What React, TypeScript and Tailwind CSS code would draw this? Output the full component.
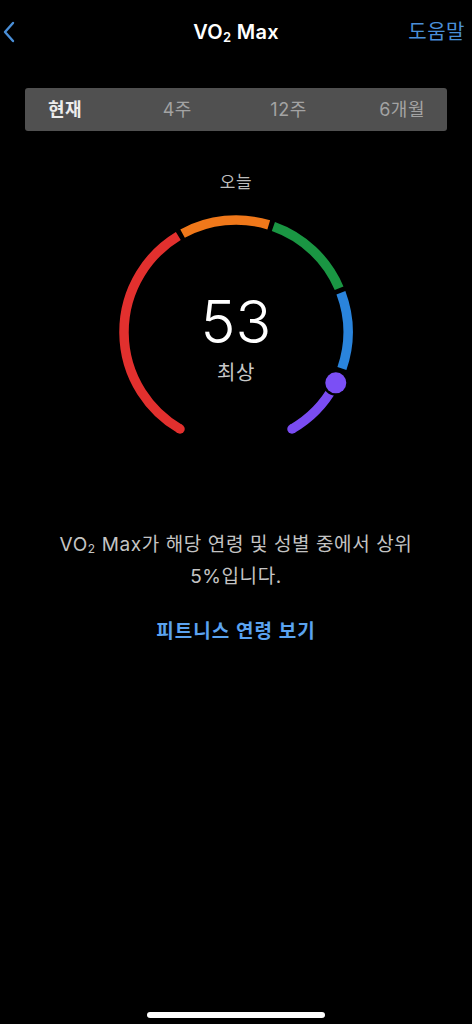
import React from 'react'

const font = { fontFamily: 'Inter, "Noto Sans CJK KR", sans-serif' }

const CX = 120
const CY = 120
const R = 112

function pt(deg: number) {
  const a = (deg * Math.PI) / 180
  return [CX + R * Math.cos(a), CY + R * Math.sin(a)]
}

function arc(a0: number, a1: number) {
  const [x0, y0] = pt(a0)
  const [x1, y1] = pt(a1)
  const large = a1 - a0 > 180 ? 1 : 0
  return `M ${x0} ${y0} A ${R} ${R} 0 ${large} 1 ${x1} ${y1}`
}

const segments = [
  { from: 120, to: 239, color: '#e2302e' },
  { from: 241.5, to: 287, color: '#f0781a' },
  { from: 289.5, to: 337, color: '#1a9643' },
  { from: 339.5, to: 379, color: '#2a84dc' },
  { from: 389, to: 420, color: '#7a4cf2' },
]

function Gauge() {
  const [sx, sy] = pt(120)
  const [ex, ey] = pt(420)
  const [dx, dy] = pt(387)
  return (
    <div className="relative w-[240px] h-[240px]">
      <svg width="240" height="240" viewBox="0 0 240 240">
        {segments.map((s) => (
          <path key={s.from} d={arc(s.from, s.to)} stroke={s.color} strokeWidth="9.5" fill="none" />
        ))}
        <circle cx={sx} cy={sy} r="4.75" fill="#e2302e" />
        <circle cx={ex} cy={ey} r="4.75" fill="#7a4cf2" />
        <circle cx={dx} cy={dy} r="13" fill="#000" />
        <circle cx={dx} cy={dy} r="10.5" fill="#7b4ff5" />
      </svg>
      <div className="absolute inset-x-0 top-[78px] text-center text-white text-[59px] leading-[64px] font-light">53</div>
      <div className="absolute inset-x-0 top-[149px] text-center text-[#c9c9c9] text-[20px] leading-6 tracking-[0.5px]">최상</div>
    </div>
  )
}

export default function App() {
  return (
    <div className="relative h-[1024px] w-full bg-black overflow-hidden" style={font}>
      {/* Nav */}
      <div className="relative h-[64px] flex items-center justify-center">
        <svg className="absolute left-[2px] top-[21px]" width="14" height="22" viewBox="0 0 14 22">
          <path d="M11 2 L3 11 L11 20" stroke="#4a8fd8" strokeWidth="2.4" fill="none" strokeLinecap="round" strokeLinejoin="round" />
        </svg>
        <div className="text-white text-[20px] font-semibold tracking-[0.3px]">
          VO<span className="text-[13px] align-[-3px]">2</span> Max
        </div>
        <div className="absolute right-[7px] top-[18px] text-[#4a8fd8] text-[20px] leading-[28px] tracking-[0.5px]">도움말</div>
      </div>

      {/* Segmented control */}
      <div className="mx-[25px] mt-[24px] h-[43px] rounded-[3px] bg-[#505050] flex items-center justify-between pl-[23px] pr-[22px] text-[18px] tracking-[0.5px]">
        <span className="text-[#ececec] font-bold">현재</span>
        <span className="text-[#a3a3a3] ml-[8px]">4주</span>
        <span className="text-[#a3a3a3] ml-[6px]">12주</span>
        <span className="text-[#a3a3a3]">6개월</span>
      </div>

      {/* Gauge */}
      <div className="flex flex-col items-center">
        <div className="mt-[41px] text-[17px] leading-5 text-[#bdbdbd] tracking-[0.5px]">오늘</div>
        <div className="mt-[20px]">
          <Gauge />
        </div>
        <div className="mt-[79px] text-center text-[19px] leading-[28px] text-[#c4c4c4] tracking-[0.6px]">
          VO<span className="text-[12px] align-[-2px]">2</span> Max가 해당 연령 및 성별 중에서 상위
          <br />
          5%입니다.
        </div>
        <div className="mt-[29px] text-[19px] leading-6 font-semibold text-[#5ba3f0] tracking-[1px]">피트니스 연령 보기</div>
      </div>

      {/* Home indicator */}
      <div className="absolute left-[147px] bottom-[6px] w-[178px] h-[6px] rounded-full bg-white" />
    </div>
  )
}
